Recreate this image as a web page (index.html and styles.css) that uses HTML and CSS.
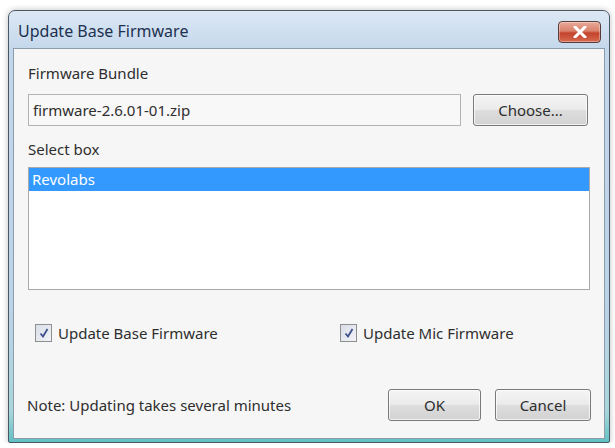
FILE: index.html
```html
<!DOCTYPE html>
<html>
<head>
<meta charset="utf-8">
<link rel="stylesheet" href="styles.css">
</head>
<body>
<div class="window">
  <div class="titlebar">
    <span class="title">Update Base Firmware</span>
    <div class="close">
      <svg width="14" height="12" viewBox="0 0 14 12"><path d="M2 1 L12 11 M12 1 L2 11" stroke="#fff" stroke-width="3" stroke-linecap="round"/></svg>
    </div>
  </div>
  <div class="content">
    <div class="label">Firmware Bundle</div>
    <div class="file-row">
      <div class="input">firmware-2.6.01-01.zip</div>
      <div class="btn choose">Choose...</div>
    </div>
    <div class="label label-select">Select box</div>
    <div class="list">
      <div class="item selected">Revolabs</div>
    </div>
    <div class="checks">
      <div class="check c1"><span class="box"><svg width="12" height="12" viewBox="0 0 12 12"><path d="M2.5 6.5 L5 9.5 L9.5 2" fill="none" stroke="#3d4f8c" stroke-width="1.8"/></svg></span>Update Base Firmware</div>
      <div class="check c2"><span class="box"><svg width="12" height="12" viewBox="0 0 12 12"><path d="M2.5 6.5 L5 9.5 L9.5 2" fill="none" stroke="#3d4f8c" stroke-width="1.8"/></svg></span>Update Mic Firmware</div>
    </div>
    <div class="bottom">
      <div class="note">Note: Updating takes several minutes</div>
      <div class="btn ok">OK</div>
      <div class="btn cancel">Cancel</div>
    </div>
  </div>
</div>
</body>
</html>
```
FILE: styles.css
```css
* { box-sizing: border-box; }
body {
  margin: 0;
  background: #ffffff;
  font-family: "Noto Sans", "Open Sans", sans-serif;
  font-size: 15px;
  color: #2e2e2e;
}
.window {
  margin: 10px 0 0 8px;
  width: 602px;
  height: 433px;
  border: 1px solid #4a5866;
  border-radius: 7px 7px 2px 2px;
  background: linear-gradient(to bottom, #dce8f4 0px, #c3d7eb 40px, #bcd2e6 300px, #a9d6da 400px, #5fc0c2 432px);
  box-shadow: 0 0 6px rgba(0,0,0,0.25);
  display: flex;
  flex-direction: column;
  padding: 0 4px 3px 4px;
}
.titlebar {
  height: 37px;
  display: flex;
  align-items: center;
  justify-content: space-between;
  padding: 0 4px 0 5px;
}
.title {
  font-size: 16px;
  color: #1d3150;
  margin-top: 2px;
}
.close {
  width: 43px;
  height: 22px;
  margin-top: 4px;
  border: 1px solid #5b3b3b;
  border-radius: 4px;
  background: linear-gradient(to bottom, #e8a999 0%, #d9826b 45%, #c4432b 55%, #d46a4f 100%);
  display: flex;
  align-items: center;
  justify-content: center;
  box-shadow: inset 0 0 0 1px rgba(255,255,255,0.35);
}
.content {
  flex: 1;
  background: #f6f6f6;
  border: 1px solid #8d9cab;
  padding: 14px 13px 0 14px;
}
.label {
  height: 20px;
  line-height: 20px;
}
.file-row {
  display: flex;
  margin-top: 11px;
  height: 32px;
}
.input {
  width: 433px;
  height: 32px;
  border: 1px solid #b3b3b3;
  background: #f8f8f8;
  line-height: 30px;
  padding-left: 4px;
}
.btn {
  height: 32px;
  border: 1px solid #7a7a7a;
  border-radius: 3px;
  background: linear-gradient(to bottom, #f4f4f4 0%, #ebebeb 48%, #dddddd 52%, #d2d2d2 100%);
  box-shadow: inset 0 0 0 1px rgba(255,255,255,0.7);
  text-align: center;
  line-height: 30px;
}
.choose {
  width: 115px;
  margin-left: 12px;
}
.label-select {
  margin-top: 13px;
}
.list {
  margin-top: 8px;
  width: 562px;
  height: 123px;
  border: 1px solid #a9a9a9;
  background: #ffffff;
}
.item {
  height: 23px;
  line-height: 22px;
  padding-left: 3px;
}
.selected {
  background: #3399ff;
  color: #ffffff;
}
.checks {
  display: flex;
  margin-top: 33px;
  height: 20px;
  align-items: center;
}
.check {
  display: flex;
  align-items: center;
}
.c1 { margin-left: 7px; width: 305px; }
.box {
  width: 17px;
  height: 18px;
  border: 1px solid #8f8f8f;
  background: linear-gradient(135deg, #d9dee8, #f2f3f7);
  margin-right: 6px;
  display: flex;
  align-items: center;
  justify-content: center;
}
.bottom {
  display: flex;
  align-items: center;
  margin-top: 46px;
  height: 32px;
}
.note {
  margin-left: -1px;
  flex: 1;
}
.ok {
  width: 93px;
}
.cancel {
  width: 96px;
  margin-left: 14px;
}
```
